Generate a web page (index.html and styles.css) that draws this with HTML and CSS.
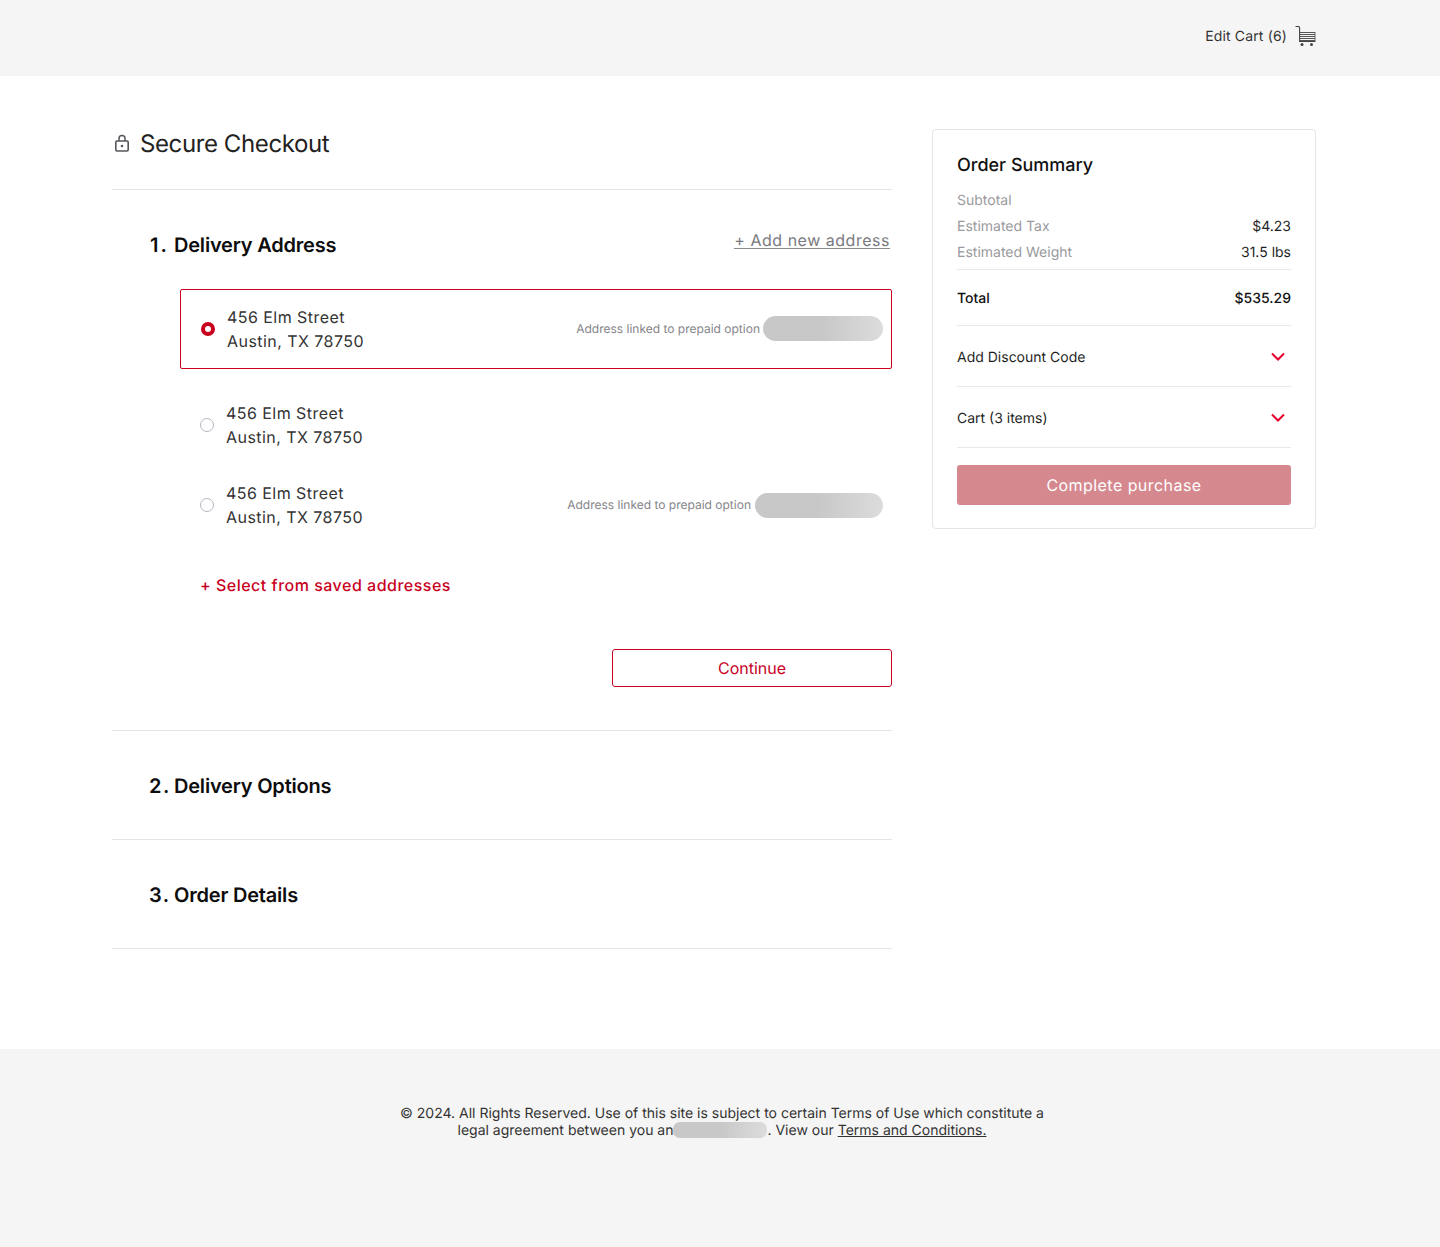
FILE: index.html
```html
<!DOCTYPE html>
<html lang="en">
<head>
<meta charset="utf-8">
<title>Secure Checkout</title>
<link rel="stylesheet" href="styles.css">
</head>
<body>
<header class="topbar">
  <a class="edit-cart">Edit Cart (6)</a>
  <svg class="cart-icon" width="22" height="22" viewBox="0 0 22 22" fill="none">
    <path d="M0.5 1.5H4L4.6 3V16.5H20.5" stroke="#444" stroke-width="1.1"/>
    <path d="M5 7.5h15M5 9.5h15M5 11.5h15M5 13.5h15M5 15.5h15" stroke="#555" stroke-width="1"/>
    <path d="M20 7v9" stroke="#666" stroke-width="1"/>
    <circle cx="7" cy="19.5" r="1.5" fill="#444"/>
    <circle cx="16.5" cy="19.5" r="1.5" fill="#444"/>
  </svg>
</header>
<main class="page">
  <section class="left">
    <div class="title-row">
      <svg class="lock" width="16" height="20" viewBox="0 0 16 20" fill="none">
        <path d="M5 8V5.5a3 3 0 0 1 6 0V8" stroke="#55555b" stroke-width="1.5"/>
        <rect x="1.8" y="8" width="12.4" height="10" rx="1.2" stroke="#55555b" stroke-width="1.6"/>
        <circle cx="8" cy="13" r="1.3" fill="#55555b"/>
      </svg>
      <h1>Secure Checkout</h1>
    </div>
    <div class="step step-open">
      <div class="step-head">
        <h2><span class="num">1.</span>Delivery Address</h2>
        <a class="add-new">+ Add new address</a>
      </div>
      <div class="addr addr-selected">
        <span class="radio radio-on"></span>
        <div class="addr-text"><div>456 Elm Street</div><div>Austin, TX 78750</div></div>
        <div class="prepaid"><span>Address linked to prepaid option</span><span class="blur blur-a"></span></div>
      </div>
      <div class="addr addr-plain">
        <span class="radio"></span>
        <div class="addr-text"><div>456 Elm Street</div><div>Austin, TX 78750</div></div>
      </div>
      <div class="addr addr-plain">
        <span class="radio"></span>
        <div class="addr-text"><div>456 Elm Street</div><div>Austin, TX 78750</div></div>
        <div class="prepaid prepaid-wide"><span>Address linked to prepaid option</span><span class="blur blur-b"></span></div>
      </div>
      <a class="saved">+ Select from saved addresses</a>
      <div class="actions"><button class="continue">Continue</button></div>
    </div>
    <div class="step step-closed"><h2><span class="num">2.</span>Delivery Options</h2></div>
    <div class="step step-closed"><h2><span class="num">3.</span>Order Details</h2></div>
  </section>
  <aside class="summary">
    <h3>Order Summary</h3>
    <div class="rows">
      <div class="row"><span class="muted">Subtotal</span><span></span></div>
      <div class="row"><span class="muted">Estimated Tax</span><span>$4.23</span></div>
      <div class="row"><span class="muted">Estimated Weight</span><span>31.5 lbs</span></div>
    </div>
    <div class="row total"><span>Total</span><span>$535.29</span></div>
    <div class="accordion"><span>Add Discount Code</span>
      <svg class="chev" width="14" height="9" viewBox="0 0 14 9" fill="none"><path d="M1 1.5l6 6 6-6" stroke="#e4002b" stroke-width="2"/></svg>
    </div>
    <div class="accordion"><span>Cart (3 items)</span>
      <svg class="chev" width="14" height="9" viewBox="0 0 14 9" fill="none"><path d="M1 1.5l6 6 6-6" stroke="#e4002b" stroke-width="2"/></svg>
    </div>
    <button class="purchase">Complete purchase</button>
  </aside>
</main>
<footer class="footer">
  <p>© 2024. All Rights Reserved. Use of this site is subject to certain Terms of Use which constitute a<br>legal agreement between you an<span class="blur blur-c"></span>. View our <a>Terms and Conditions.</a></p>
</footer>
</body>
</html>
```
FILE: styles.css
```css
* { box-sizing: border-box; }
html, body { margin: 0; padding: 0; }
body { font-family: Inter, "Liberation Sans", sans-serif; color: #1f1f1f; background: #fff; height: 1247px; display: flex; flex-direction: column; text-rendering: geometricPrecision; }
h1, h2, h3, p { margin: 0; font-weight: 400; }

.topbar { height: 76px; background: #f5f5f5; display: flex; align-items: center; justify-content: flex-end; padding: 0 123px 2px 0; gap: 8px; flex: none; }
.edit-cart { font-size: 14px; letter-spacing: 0.15px; color: #333; margin-bottom: 1px; }
.cart-icon { display: block; margin-top: -2px; }

.page { flex: 1; display: flex; gap: 40px; padding: 53px 124px 0 112px; }
.left { width: 780px; flex: none; }
.title-row { display: flex; align-items: flex-start; height: 61px; padding: 0 0 0 2px; gap: 10px; border-bottom: 1px solid #e5e5e5; }
.lock { display: block; margin-top: 4px; }
h1 { font-size: 24px; line-height: 29px; color: #222; letter-spacing: -0.4px; }

.step { border-bottom: 1px solid #e5e5e5; }
.step-open { height: 541px; }
.step-closed { height: 109px; padding: 43px 0 0 37px; }
.step-head { display: flex; justify-content: space-between; align-items: flex-start; padding: 43px 2px 0 38px; height: 99px; }
h2 { font-size: 20px; line-height: 24px; font-weight: 600; color: #0d0d0d; letter-spacing: -0.2px; }
.num { display: inline-block; width: 25px; letter-spacing: 1.5px; }
.step-head .num { width: 24px; letter-spacing: 2px; }
.add-new { font-size: 16px; line-height: 15px; letter-spacing: 0.52px; color: #7a7a80; border-bottom: 1px solid #8a8a90; }

.addr { display: flex; align-items: center; margin-left: 68px; font-size: 16px; line-height: 24px; letter-spacing: 0.45px; color: #333; }
.addr-selected { height: 80px; border: 1px solid #c8001e; border-radius: 2px; padding: 0 8px 0 20px; margin-bottom: 16px; }
.addr-plain { height: 80px; padding: 0 9px 0 20px; }
.radio { width: 14px; height: 14px; border: 1px solid #b4b8c0; border-radius: 50%; flex: none; margin-right: 12px; background: #fff; }
.radio-on { border: 4px solid #c8001e; }
.addr-text { flex: none; }
.prepaid { margin-left: auto; display: flex; align-items: center; font-size: 12px; line-height: 16px; letter-spacing: 0; color: #85858a; gap: 3px; }
.prepaid-wide { gap: 4px; }

.blur { display: inline-block; background: linear-gradient(90deg, #c8c8c8 0%, #c8c8c8 50%, #dcdcdc 100%); }
.blur-a { width: 120px; height: 25px; border-radius: 13px; margin-bottom: 1px; }
.blur-b { width: 128px; height: 25px; border-radius: 13px; }
.blur-c { width: 94px; height: 16px; border-radius: 7px; vertical-align: -3px; }

.saved { display: block; margin: 28px 0 0 88px; font-size: 16px; line-height: 24px; letter-spacing: 0.5px; color: #c8001e; font-weight: 500; }
.actions { display: flex; justify-content: flex-end; margin-top: 52px; }
.continue { width: 280px; height: 38px; background: #fff; border: 1px solid #c8001e; border-radius: 3px; color: #c8001e; font: 400 16px Inter, sans-serif; text-rendering: geometricPrecision; }

.summary { width: 384px; height: 400px; flex: none; border: 1px solid #e5e5e5; border-radius: 4px; padding: 25px 24px 0; }
h3 { font-size: 18px; line-height: 22px; font-weight: 500; color: #111; }
.rows { margin-top: 11px; border-bottom: 1px solid #e8e8e8; padding-bottom: 3px; }
.row { display: flex; justify-content: space-between; font-size: 14px; line-height: 26px; height: 26px; color: #1f1f1f; }
.muted { color: #9a9a9e; }
.total { height: 56px; line-height: 58px; font-weight: 500; color: #111; border-bottom: 1px solid #e8e8e8; }
.accordion { display: flex; justify-content: space-between; align-items: center; height: 61px; padding-top: 2px; border-bottom: 1px solid #e8e8e8; font-size: 14px; letter-spacing: 0; padding-right: 6px; color: #1f1f1f; }
.chev { display: block; margin-top: -2px; }
.purchase { display: block; width: 100%; height: 40px; margin-top: 17px; background: #d5898e; border: 0; border-radius: 3px; color: #fff; font: 400 16px Inter, sans-serif; letter-spacing: 0.45px; text-rendering: geometricPrecision; }

.footer { height: 198px; flex: none; background: #f5f5f5; padding-top: 56px; font-size: 14px; line-height: 17px; color: #333; text-align: center; }
.footer p { width: 660px; margin-left: 392px; }
.footer a { text-decoration: underline; }
```
